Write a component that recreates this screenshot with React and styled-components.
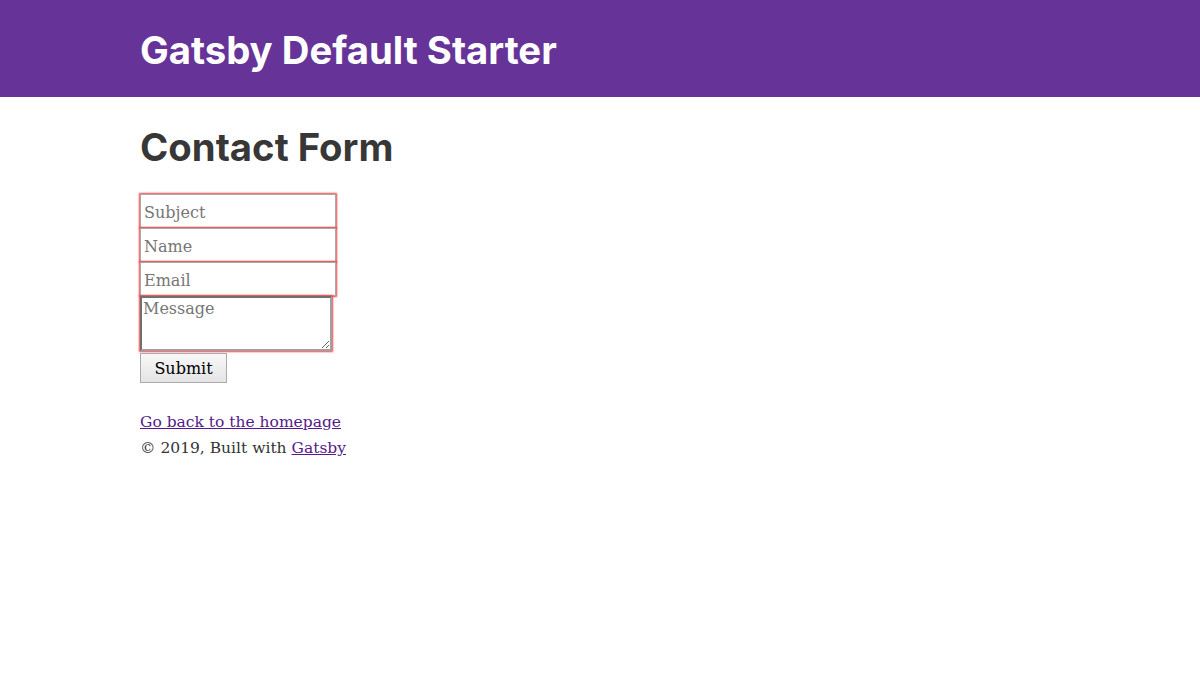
import React from "react";
import styled, { createGlobalStyle } from "styled-components";

const GlobalStyle = createGlobalStyle`
  body {
    margin: 0;
    color: hsla(0, 0%, 0%, 0.8);
    font-family: "DejaVu Serif", Georgia, serif;
    font-size: 15.5px;
    line-height: 26px;
    background: #fff;
  }
`;

const Header = styled.header`
  background: rebeccapurple;
  margin-bottom: 26px;
`;

const HeaderInner = styled.div`
  max-width: 960px;
  margin: 0 auto;
  padding: 26px 20px;
  box-sizing: border-box;
`;

const Title = styled.h1`
  margin: 0;
  font-family: Inter, "Noto Sans", sans-serif;
  font-weight: 700;
  font-size: 38.3px;
  line-height: 44.5px;
  padding-top: 2px;
  margin-bottom: -2px;
  a {
    color: #fff;
    text-decoration: none;
  }
`;

const Main = styled.main`
  max-width: 960px;
  margin: 0 auto;
  padding: 0 20px 26px;
  box-sizing: border-box;
`;

const Heading = styled.h1`
  margin: 0 0 27px;
  padding-top: 2px;
  height: 42.5px;
  font-family: Inter, "Noto Sans", sans-serif;
  font-weight: 700;
  font-size: 38.3px;
  line-height: 44.5px;
  color: hsla(0, 0%, 0%, 0.8);
`;

const Form = styled.form`
  display: flex;
  flex-direction: column;
  align-items: flex-start;
  margin: 0 0 26px;
`;

const Field = styled.input`
  box-sizing: border-box;
  width: 196px;
  height: 34px;
  margin: 0;
  padding: 3px 3px 1px;
  font-family: "DejaVu Serif", Georgia, serif;
  font-size: 16px;
  border: 1px solid #a9a9a9;
  box-shadow: 0 0 1.5px 1px #f04848;
  outline: none;
  &::placeholder {
    color: #767676;
  }
`;

const Area = styled.textarea`
  box-sizing: border-box;
  width: 192px;
  height: 55px;
  margin: 0;
  padding: 1px 1px;
  font-family: "DejaVu Serif", Georgia, serif;
  font-size: 16px;
  line-height: 1.2;
  border: 2px solid;
  border-color: #6f6f6f #a0a0a0 #a0a0a0 #6f6f6f;
  box-shadow: 0 0 1.5px 1px #f04848;
  outline: none;
  &::placeholder {
    color: #767676;
  }
`;

const Submit = styled.button`
  box-sizing: border-box;
  margin-top: 2px;
  width: 87px;
  height: 30px;
  padding: 0;
  font-family: "DejaVu Serif", Georgia, serif;
  font-size: 16px;
  color: #000;
  background: linear-gradient(#f8f8f8, #e4e4e4);
  border: 1px solid #ababab;
  border-radius: 0;
`;

const Link = styled.a`
  color: #551a8b;
  text-decoration: underline;
`;

const Line = styled.div`
  line-height: 26px;
  color: #333;
`;

export default function App() {
  return (
    <>
      <GlobalStyle />
      <Header>
        <HeaderInner>
          <Title>
            <a href="#">Gatsby Default Starter</a>
          </Title>
        </HeaderInner>
      </Header>
      <Main>
        <Heading>Contact Form</Heading>
        <Form onSubmit={(e) => e.preventDefault()}>
          <Field type="text" placeholder="Subject" />
          <Field type="text" placeholder="Name" />
          <Field type="email" placeholder="Email" />
          <Area placeholder="Message" />
          <Submit type="submit">Submit</Submit>
        </Form>
        <Line>
          <Link href="#">Go back to the homepage</Link>
        </Line>
        <Line>
          © 2019, Built with <Link href="#">Gatsby</Link>
        </Line>
      </Main>
    </>
  );
}
